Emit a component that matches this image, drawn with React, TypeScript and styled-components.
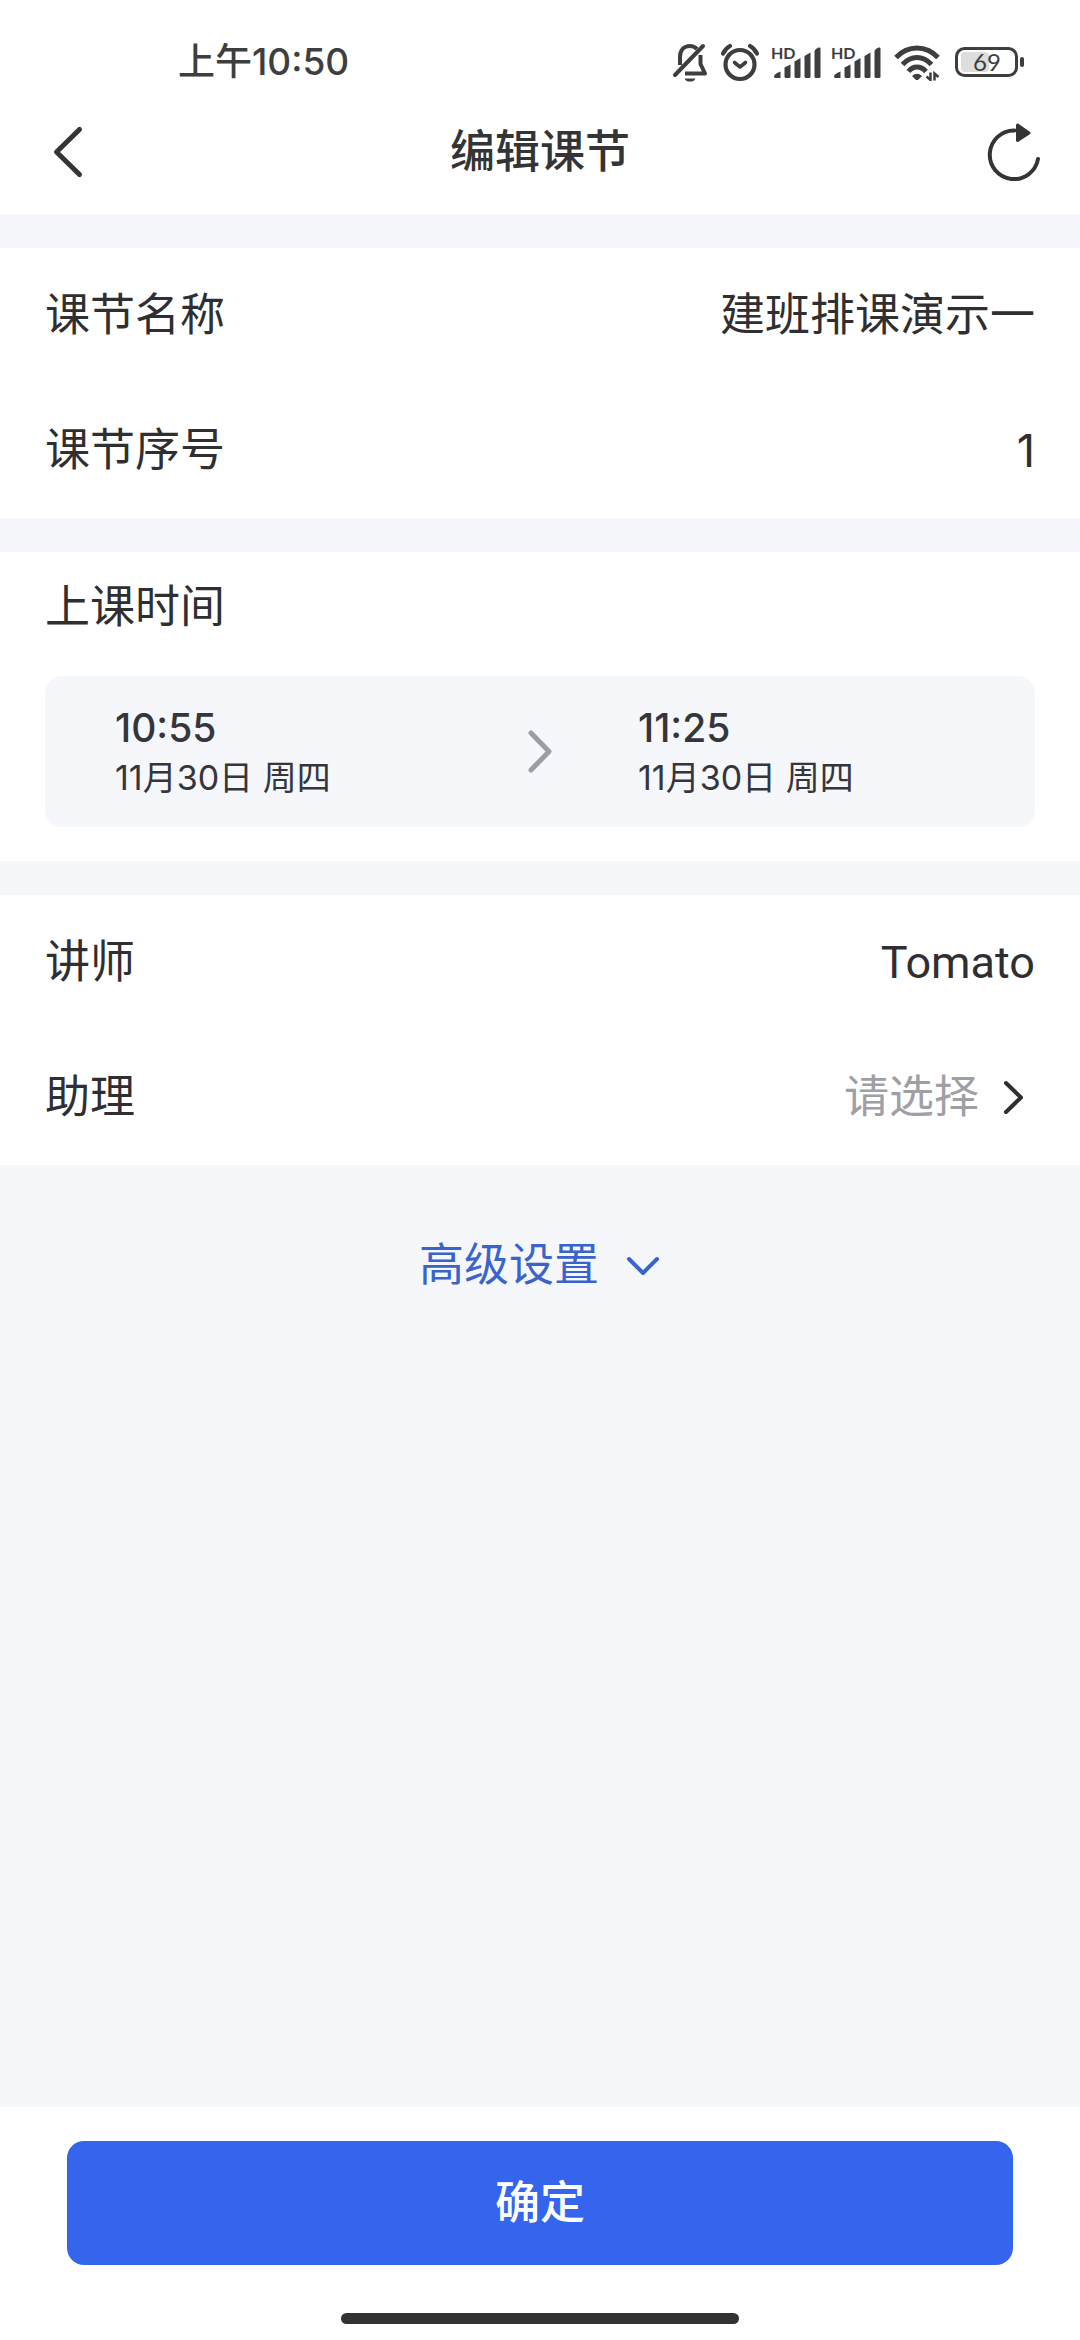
import React from "react";
import styled, { createGlobalStyle } from "styled-components";

const sans = `"Roboto", "Noto Sans CJK SC", sans-serif`;
const numeric = `"Inter", "Noto Sans CJK SC", sans-serif`;

const GlobalStyle = createGlobalStyle`
  *, *::before, *::after { box-sizing: border-box; }
  body { margin: 0; background: #f5f7fb; font-family: ${sans}; }
  button, input { font: inherit; color: inherit; border: 0; padding: 0; margin: 0; background: none; }
  button { cursor: pointer; }
  svg { display: block; flex: none; }
`;

const Page = styled.div`
  display: flex;
  flex-direction: column;
  min-height: 100vh;
  color: #2f2f31;
  font-size: 45px;
  line-height: 66px;
`;

const StatusBar = styled.div`
  display: flex;
  align-items: center;
  justify-content: space-between;
  height: 90px;
  padding: 34px 55px 0 178px;
  background: #fff;
  color: #3e3e3e;
`;

const Clock = styled.span`
  font-family: ${numeric};
  font-size: 37px;
  font-weight: 500;
  line-height: 56px;
`;

const StatusIcons = styled.div`
  display: flex;
  align-items: center;
  gap: 12px;
`;

const SignalGroup = styled.div`
  display: flex;
  gap: 10px;
`;

const Header = styled.header`
  display: grid;
  grid-template-columns: 1fr auto 1fr;
  align-items: center;
  height: 124px;
  padding: 0 36px;
  background: #fff;
  color: #343436;
`;

const Title = styled.h1`
  margin: 0;
  padding-top: 2px;
  font-size: 45px;
  font-weight: 500;
`;

const IconButton = styled.button<{ $end?: boolean }>`
  display: flex;
  justify-self: ${(p) => (p.$end ? "end" : "start")};
`;

const Content = styled.main`
  display: flex;
  flex: 1;
  flex-direction: column;
  gap: 34px;
  padding-top: 34px;
`;

const Section = styled.section<{ $padded?: boolean }>`
  padding: ${(p) => (p.$padded ? "23px 45px 34px" : "0 45px")};
  background: #fff;
`;

const SectionTitle = styled.h2`
  margin: 0;
  font-size: 45px;
  font-weight: 400;
`;

const Row = styled.div`
  display: flex;
  align-items: center;
  justify-content: space-between;
  height: 135px;
`;

const Label = styled.label`
  flex: none;
`;

const Field = styled.input`
  flex: 1;
  min-width: 0;
  height: 66px;
  text-align: right;
  outline: none;
`;

const NumberField = styled(Field)`
  font-family: ${numeric};
`;

const PickButton = styled.button`
  display: flex;
  align-items: center;
  color: #2f2f31;
`;

const Placeholder = styled.span`
  color: #9fa0a5;
`;

const TimeCard = styled.div`
  display: grid;
  grid-template-columns: 1fr 56px 1fr;
  align-items: center;
  margin-top: 35px;
  padding: 26px 0;
  border-radius: 17px;
  background: #f5f7fb;
  color: #35363b;
  font-family: ${numeric};
`;

const TimeButton = styled.button`
  display: flex;
  flex-direction: column;
  padding-left: 70px;
  text-align: left;
`;

const Time = styled.span`
  font-size: 39px;
  font-weight: 500;
  line-height: 52px;
`;

const DateText = styled.span`
  font-size: 34px;
  line-height: 47px;
`;

const Arrow = styled.span`
  display: flex;
  justify-content: center;
  color: #9c9da3;
`;

const AdvancedButton = styled.button`
  display: flex;
  align-items: center;
  align-self: center;
  gap: 26px;
  margin-top: 34px;
  color: #3a64cc;
`;

const Footer = styled.footer`
  display: flex;
  flex-direction: column;
  align-items: center;
  padding: 34px 67px 16px;
  background: #fff;
`;

const Confirm = styled.button`
  width: 100%;
  padding: 30px 0 28px;
  border-radius: 17px;
  background: #3565ed;
  color: #fff;
  font-weight: 500;
`;

const HomeBar = styled.div`
  width: 42%;
  height: 11px;
  margin-top: 48px;
  border-radius: 6px;
  background: #323232;
`;

const MutedBell = () => (
  <svg width="36" height="40" viewBox="0 0 36 40" fill="none" stroke="currentColor" strokeWidth="4">
    <path d="M8 23V15C8 8 12 4 18 4c3 0 5 1 7 3" />
    <path d="M3 33L31 4" strokeLinecap="round" />
    <path d="M28.500 13v9l4.500 9.500H13" strokeLinejoin="round" />
    <path d="M12.500 36.500h11c-1 2.500-3 3-5.500 3s-4.500-.5-5.500-3z" fill="currentColor" stroke="none" />
  </svg>
);

const Alarm = () => (
  <svg width="40" height="40" viewBox="0 0 40 40" fill="none" stroke="currentColor" strokeWidth="4.200" strokeLinecap="round">
    <circle cx="20" cy="22.500" r="14.500" />
    <path d="M3 11.500Q5.500 6.500 10 4M37 11.500Q34.500 6.500 30 4" />
    <path d="M14.500 20.500l5.500 4.500 5.500-4.500" strokeWidth="3.600" strokeLinejoin="round" />
  </svg>
);

const Signal = () => (
  <svg width="50" height="36" viewBox="0 0 50 36" fill="currentColor">
    <text x="-1" y="15" fontFamily="Lato, sans-serif" fontSize="16" fontWeight="700">HD</text>
    <path d="M2 32.500q0-2.500 6.500-5v6.500H3.500q-1.500 0-1.500-1.500z" />
    <path d="M12.500 23.500l6-3V32.500q0 1.500-1.500 1.500h-3q-1.500 0-1.500-1.500z" />
    <path d="M22.500 17.500l6-3.500V32.500q0 1.500-1.500 1.500h-3q-1.500 0-1.500-1.500z" />
    <path d="M32.500 12l6-3.500V32.500q0 1.500-1.500 1.500h-3q-1.500 0-1.500-1.500z" />
    <path d="M42.500 7.500q0-2 4-4 2-.5 2 1V32.500q0 1.500-1.500 1.500h-3q-1.500 0-1.500-1.500z" />
  </svg>
);

const Wifi = () => (
  <svg width="49" height="38" viewBox="0 0 49 38" fill="none" stroke="currentColor" strokeWidth="5">
    <path d="M2 14.500Q11 5 23 5T44 14.500" />
    <path d="M8.500 21.500Q15 14.500 23 14.500t14.500 7" />
    <path d="M14.500 28.500Q18 24 23 24t9 4.500" />
    <path d="M18 33q5-4.500 10 0l-3.500 3.500q-1.500 1-3 0z" fill="currentColor" stroke="none" />
    <path d="M36.500 29.500v7.500l-4-3.500M40.500 37.500V30.500l4 3.500" strokeWidth="2.500" />
  </svg>
);

const Battery = () => (
  <svg width="70" height="32" viewBox="0 0 70 32">
    <rect x="6" y="6" width="28" height="20" rx="4" fill="#dedede" />
    <rect x="1.500" y="2.500" width="60" height="27" rx="8" fill="none" stroke="currentColor" strokeWidth="3" />
    <rect x="65" y="11" width="4" height="10" rx="2" fill="currentColor" />
    <text x="32" y="24.500" textAnchor="middle" fontFamily="Lato, sans-serif" fontSize="24" fill="currentColor">69</text>
  </svg>
);

const Back = () => (
  <svg width="60" height="60" viewBox="0 0 60 60" fill="none" stroke="currentColor" strokeWidth="5" strokeLinecap="round" strokeLinejoin="round">
    <path d="M43.500 7.500L20.500 30l23 22.500" />
  </svg>
);

const Refresh = () => (
  <svg width="60" height="60" viewBox="0 0 60 60" fill="none" stroke="currentColor" strokeWidth="4" strokeLinecap="round">
    <path d="M30.500 8.500A24.300 24.300 0 1 0 54 37" />
    <path d="M33.500 3l11.500 8L33.500 18.500z" fill="currentColor" strokeWidth="3" strokeLinejoin="round" />
  </svg>
);

const Chevron = ({ d, w, h, stroke }: { d: string; w: number; h: number; stroke: number }) => (
  <svg width={w} height={h} viewBox={`0 0 ${w} ${h}`} fill="none" stroke="currentColor" strokeWidth={stroke} strokeLinecap="round" strokeLinejoin="round">
    <path d={d} />
  </svg>
);

export default function App() {
  return (
    <Page>
      <GlobalStyle />
      <StatusBar>
        <Clock>上午10:50</Clock>
        <StatusIcons>
          <MutedBell />
          <Alarm />
          <SignalGroup>
            <Signal />
            <Signal />
          </SignalGroup>
          <Wifi />
          <Battery />
        </StatusIcons>
      </StatusBar>
      <Header>
        <IconButton type="button" aria-label="返回">
          <Back />
        </IconButton>
        <Title>编辑课节</Title>
        <IconButton type="button" aria-label="刷新" $end>
          <Refresh />
        </IconButton>
      </Header>
      <Content>
        <Section>
          <Row>
            <Label htmlFor="lesson-name">课节名称</Label>
            <Field id="lesson-name" type="text" defaultValue="建班排课演示一" />
          </Row>
          <Row>
            <Label htmlFor="lesson-index">课节序号</Label>
            <NumberField id="lesson-index" type="text" inputMode="numeric" defaultValue="1" />
          </Row>
        </Section>
        <Section $padded>
          <SectionTitle>上课时间</SectionTitle>
          <TimeCard>
            <TimeButton type="button">
              <Time>10:55</Time>
              <DateText>11月30日 周四</DateText>
            </TimeButton>
            <Arrow>
              <Chevron d="M3 3l18 18.500L3 40" w={24} h={43} stroke={5} />
            </Arrow>
            <TimeButton type="button">
              <Time>11:25</Time>
              <DateText>11月30日 周四</DateText>
            </TimeButton>
          </TimeCard>
        </Section>
        <Section>
          <Row>
            <Label htmlFor="teacher">讲师</Label>
            <Field id="teacher" type="text" defaultValue="Tomato" />
          </Row>
          <Row>
            <Label htmlFor="assistant">助理</Label>
            <PickButton id="assistant" type="button">
              <Placeholder>请选择</Placeholder>
              <Chevron d="M27 8l15 14.500L27 37" w={56} h={45} stroke={4} />
            </PickButton>
          </Row>
        </Section>
        <AdvancedButton type="button">
          高级设置
          <Chevron d="M4 11l14 14 14-14" w={36} h={36} stroke={4} />
        </AdvancedButton>
      </Content>
      <Footer>
        <Confirm type="button">确定</Confirm>
        <HomeBar />
      </Footer>
    </Page>
  );
}
